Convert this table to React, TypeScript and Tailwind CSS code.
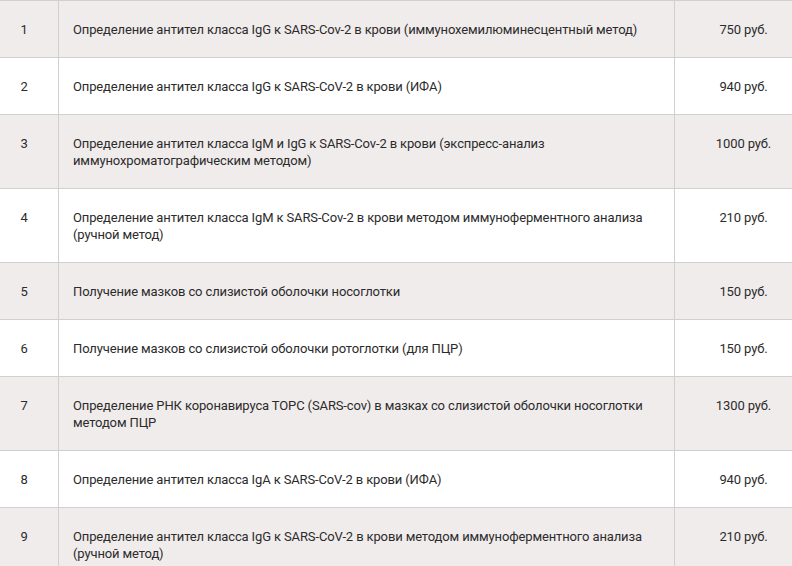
import React from 'react';

interface Row {
  n: number;
  name: string;
  price: string;
}

const rows: Row[] = [
  { n: 1, name: 'Определение антител класса IgG к SARS-Cov-2 в крови (иммунохемилюминесцентный метод)', price: '750 руб.' },
  { n: 2, name: 'Определение антител класса IgG к SARS-CoV-2 в крови (ИФА)', price: '940 руб.' },
  { n: 3, name: 'Определение антител класса IgM и IgG к SARS-Cov-2 в крови (экспресс-анализ иммунохроматографическим методом)', price: '1000 руб.' },
  { n: 4, name: 'Определение антител класса IgM к SARS-Cov-2 в крови методом иммуноферментного анализа (ручной метод)', price: '210 руб.' },
  { n: 5, name: 'Получение мазков со слизистой оболочки носоглотки', price: '150 руб.' },
  { n: 6, name: 'Получение мазков со слизистой оболочки ротоглотки (для ПЦР)', price: '150 руб.' },
  { n: 7, name: 'Определение РНК коронавируса ТОРС (SARS-cov) в мазках со слизистой оболочки носоглотки методом ПЦР', price: '1300 руб.' },
  { n: 8, name: 'Определение антител класса IgA к SARS-CoV-2 в крови (ИФА)', price: '940 руб.' },
  { n: 9, name: 'Определение антител класса IgG к SARS-CoV-2 в крови методом иммуноферментного анализа (ручной метод)', price: '210 руб.' },
];

const App: React.FC = () => {
  return (
    <div className="w-[792px] h-[566px] overflow-hidden bg-white font-['Roboto',sans-serif] text-[13px] leading-[17px] tracking-[-0.13px] text-[#2b2b2b]">
      <div className="border-t border-[#d0d0d0]">
        {rows.map((r) => (
          <div
            key={r.n}
            className={`flex border-b border-[#d0d0d0] ${r.n % 2 === 1 ? 'bg-[#f1ecec]' : 'bg-white'}`}
          >
            <div className="w-[59px] shrink-0 border-r border-[#d0d0d0] pt-[20px] pb-[19px] pr-[10px] text-center">
              {r.n}
            </div>
            <div className="w-[616px] shrink-0 border-r border-[#d0d0d0] pt-[20px] pb-[19px] pl-[14px] pr-[20px]">
              {r.name}
            </div>
            <div className="flex-1 pt-[20px] pb-[19px] pl-[20px] text-center">{r.price}</div>
          </div>
        ))}
      </div>
    </div>
  );
};

export default App;
